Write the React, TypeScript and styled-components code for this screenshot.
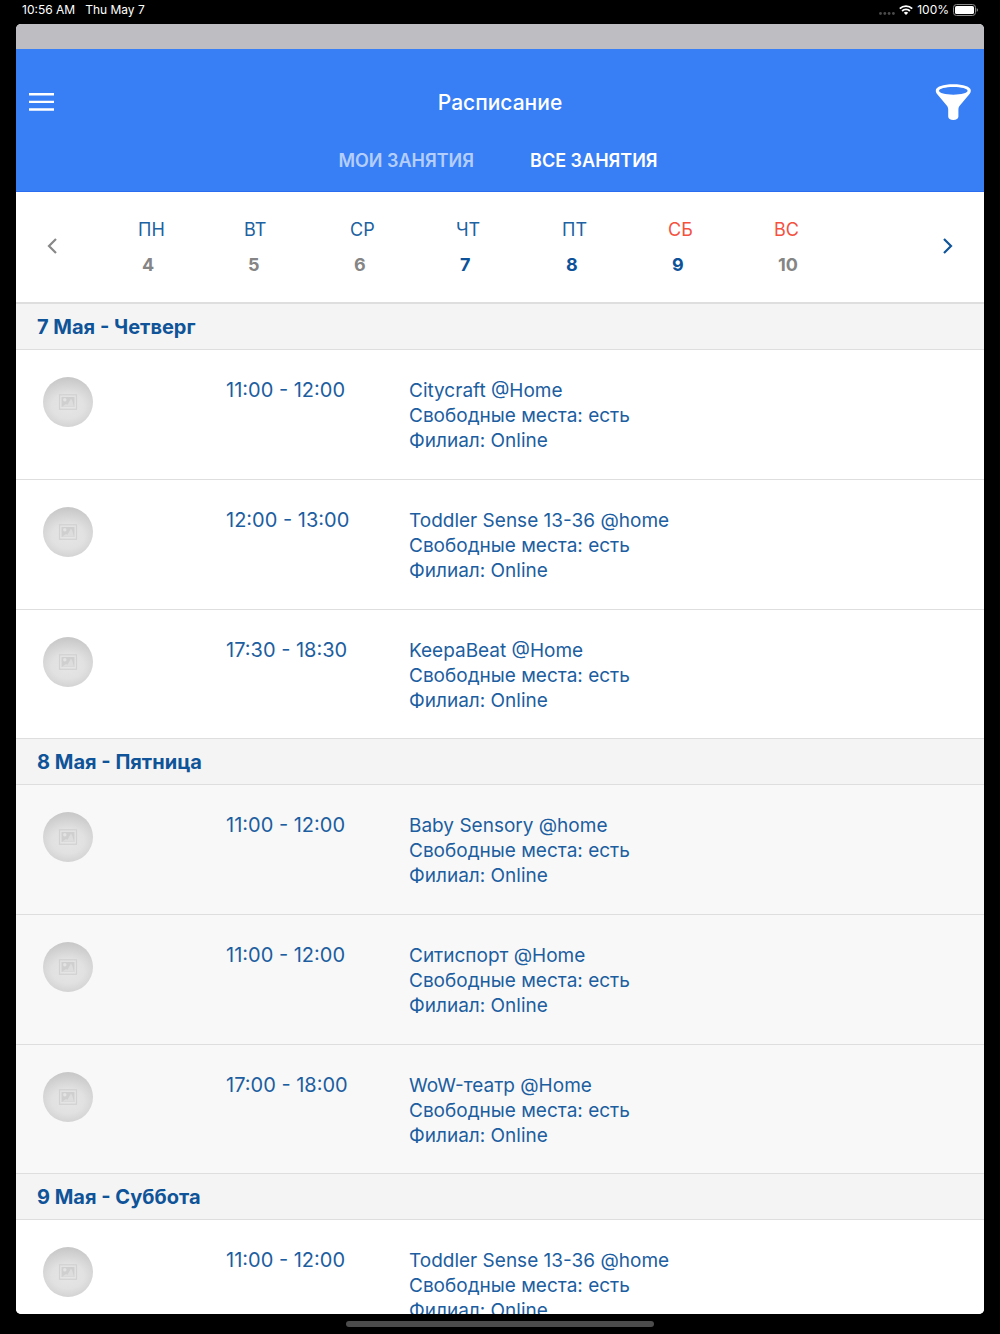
import React, { useState } from "react";
import styled, { createGlobalStyle } from "styled-components";

const GlobalStyle = createGlobalStyle`
  * { box-sizing: border-box; }
  body {
    margin: 0;
    background: #000;
    font-family: Inter, "Liberation Sans", sans-serif;
    -webkit-font-smoothing: antialiased;
  }
  button { font: inherit; border: 0; padding: 0; background: none; cursor: pointer; }
  h1, h2, p, ul { margin: 0; padding: 0; }
  ul { list-style: none; }
`;

const Device = styled.div`
  height: 100vh;
  display: flex;
  flex-direction: column;
  padding: 0 16px;
`;

const StatusBar = styled.div`
  flex: none;
  height: 24px;
  padding: 0 6px 4px;
  display: flex;
  align-items: center;
  justify-content: space-between;
  color: #fff;
  font-size: 12px;
  line-height: 20px;
`;

const StatusGroup = styled.div<{ $gap: number }>`
  display: flex;
  align-items: center;
  gap: ${(p) => p.$gap}px;
`;

const Screen = styled.div`
  flex: 1;
  min-height: 0;
  display: flex;
  flex-direction: column;
  overflow: hidden;
  border-radius: 5px;
  background: #fff;
`;

const TopStrip = styled.div`
  flex: none;
  height: 25px;
  background: #bebdc2;
`;

const Header = styled.header`
  flex: none;
  padding: 24px 12px 14px;
  background: #387ef5;
  border-bottom: 1px solid #2a6df0;
  color: #fff;
`;

const TitleRow = styled.div`
  display: grid;
  grid-template-columns: 60px 1fr 60px;
  align-items: center;
  height: 58px;
`;

const Title = styled.h1`
  padding-top: 2px;
  text-align: center;
  font-size: 21px;
  line-height: 28px;
  font-weight: 500;
`;

const IconButton = styled.button<{ $end?: boolean }>`
  display: flex;
  justify-content: ${(p) => (p.$end ? "flex-end" : "flex-start")};
  align-items: center;
  color: inherit;
`;

const Tabs = styled.div`
  display: flex;
  justify-content: center;
  gap: 56px;
  padding: 18px 4px 4px 0;
`;

const Tab = styled.button<{ $active: boolean }>`
  && {
    font-size: 18px;
    font-weight: 600;
    line-height: 24px;
    color: ${(p) => (p.$active ? "#fff" : "rgba(255, 255, 255, 0.65)")};
  }
`;

const Week = styled.nav`
  flex: none;
  display: grid;
  grid-template-columns: 122px repeat(7, 1fr) 104px;
  padding: 25px 0 24px;
  border-bottom: 1px solid #dedede;
`;

const Arrow = styled.button<{ $end?: boolean }>`
  && {
    display: flex;
    align-items: center;
    justify-content: ${(p) => (p.$end ? "flex-end" : "flex-start")};
    padding: ${(p) => (p.$end ? "0 31px 4px 0" : "0 0 4px 31px")};
    color: ${(p) => (p.$end ? "#10559a" : "#888")};
  }
`;

const Day = styled.button`
  display: flex;
  flex-direction: column;
  align-items: flex-start;
  gap: 9px;
`;

const DayName = styled.span<{ $weekend: boolean }>`
  font-size: 18px;
  line-height: 26px;
  color: ${(p) => (p.$weekend ? "#f4513f" : "#2061a2")};
`;

const DayNumber = styled.span<{ $open: boolean }>`
  padding-left: 4px;
  font-size: 18px;
  font-weight: 700;
  line-height: 26px;
  color: ${(p) => (p.$open ? "#0d5299" : "#858585")};
`;

const Schedule = styled.main`
  flex: 1;
  min-height: 0;
  overflow: hidden;
`;

const DayHeading = styled.h2`
  padding: 9px 21px 8px;
  border-top: 1px solid #dedede;
  border-bottom: 1px solid #dedede;
  background: #f4f4f4;
  color: #0f5398;
  font-size: 20px;
  font-weight: 700;
  line-height: 28px;
`;

const Section = styled.section<{ $shaded: boolean }>`
  background: ${(p) => (p.$shaded ? "#f8f8f8" : "#fff")};
  & + & { margin-top: -1px; }
`;

const Lesson = styled.li`
  display: grid;
  grid-template-columns: 1fr 1fr 3fr;
  padding: 27px 26px 26px 27px;
  color: #1c5e9f;
  line-height: 25px;
  border-bottom: 1px solid #dedede;
  &:last-child { border-bottom: 0; }
`;

const LessonTime = styled.time`
  padding-top: 1px;
  font-size: 20px;
`;

const LessonInfo = styled.div`
  padding-top: 1px;
  font-size: 19px;
`;

const Avatar = styled.div`
  width: 50px;
  height: 50px;
  display: flex;
  align-items: center;
  justify-content: center;
  border-radius: 50%;
  background: radial-gradient(ellipse 36px 28px at 50% 58%, #e6e6e6 0%, #e1e1e1 45%, #c8c8c8 100%);
`;

const MenuIcon = () => (
  <svg width="36" height="22" viewBox="0 0 36 22" fill="currentColor" aria-hidden="true">
    <path d="M1 2h25v2.4H1zM1 9.7h25v2.4H1zM1 17.3h25v2.4H1z" />
  </svg>
);

const FunnelIcon = () => (
  <svg width="37" height="36" viewBox="0 0 37 36" fill="currentColor" aria-hidden="true">
    <path
      fillRule="evenodd"
      d="M18.300 0.300C8.300.300.800 2.700.800 6.500c0 1.600.6 2.800 1.900 4.300l8.800 10.400c1.200 1.500 1.700 2.700 1.700 4.300v7c0 2.300 2 3.500 5.100 3.500s5.100-1.200 5.100-3.500v-7c0-1.600.5-2.800 1.700-4.300l8.800-10.400c1.300-1.500 1.900-2.700 1.900-4.300C35.800 2.700 28.300.300 18.300.300ZM18.300 2.900c8 0 14.300 1.600 14.300 3.900s-6.300 3.900-14.300 3.900S4 9.100 4 6.800s6.300-3.900 14.300-3.900Z"
    />
  </svg>
);

const WifiIcon = () => (
  <svg width="14" height="10" viewBox="0 0 14 10" fill="none" stroke="#fff" strokeWidth="1.8" aria-hidden="true">
    <path d="M.8 3.700a8.800 8.800 0 0 1 12.400 0M3.100 6a5.500 5.500 0 0 1 7.800 0" />
    <path d="M7 10 4.800 7.800a3.100 3.100 0 0 1 4.400 0Z" fill="#fff" stroke="none" />
  </svg>
);

const SignalDots = () => (
  <svg width="16" height="12" viewBox="0 0 16 12" fill="#4b4b4b" aria-hidden="true">
    {[1.5, 5.8, 10.1, 14.4].map((x) => (
      <circle key={x} cx={x} cy="9.5" r="1.4" />
    ))}
  </svg>
);

const BatteryIcon = () => (
  <svg width="25" height="12" viewBox="0 0 25 12" aria-hidden="true">
    <rect x=".5" y=".5" width="22" height="11" rx="3" fill="none" stroke="#8a8a8a" />
    <rect x="2" y="2" width="19" height="8" rx="1.6" fill="#fff" />
    <path d="M23.700 4.200c.9.300 1.300 1 1.300 1.800s-.4 1.500-1.300 1.800Z" fill="#8a8a8a" />
  </svg>
);

const Chevron = ({ right = false }: { right?: boolean }) => (
  <svg width="11" height="16" viewBox="0 0 11 16" fill="none" stroke="currentColor" strokeWidth="2.2" aria-hidden="true">
    <path d={right ? "M2 1l7 7-7 7" : "M9 1 2 8l7 7"} />
  </svg>
);

const PictureIcon = () => (
  <svg width="20" height="16" viewBox="0 0 20 16" aria-hidden="true">
    <rect x="1.5" y=".75" width="17" height="14.5" fill="none" stroke="#d2d2d2" strokeWidth="1.2" />
    <rect x="3.500" y="3" width="13" height="10" fill="#cfcfcf" />
    <circle cx="6.800" cy="5.800" r="1.700" fill="#e3e3e3" />
    <path d="M4 12.800 8 10l1.500.8 3.500-6.300 1.300 2.200L16 12.800Z" fill="#dddddd" />
  </svg>
);

const days = [
  { name: "ПН", number: 4 },
  { name: "ВТ", number: 5 },
  { name: "СР", number: 6 },
  { name: "ЧТ", number: 7, open: true },
  { name: "ПТ", number: 8, open: true },
  { name: "СБ", number: 9, open: true, weekend: true },
  { name: "ВС", number: 10, weekend: true },
];

const schedule = [
  {
    title: "7 Мая - Четверг",
    lessons: [
      ["11:00 - 12:00", "Citycraft @Home"],
      ["12:00 - 13:00", "Toddler Sense 13-36 @home"],
      ["17:30 - 18:30", "KeepaBeat @Home"],
    ],
  },
  {
    title: "8 Мая - Пятница",
    shaded: true,
    lessons: [
      ["11:00 - 12:00", "Baby Sensory @home"],
      ["11:00 - 12:00", "Ситиспорт @Home"],
      ["17:00 - 18:00", "WoW-театр @Home"],
    ],
  },
  {
    title: "9 Мая - Суббота",
    lessons: [["11:00 - 12:00", "Toddler Sense 13-36 @home"]],
  },
];

const HomeArea = styled.div`
  flex: none;
  height: 20px;
  display: flex;
  align-items: center;
  justify-content: center;
`;

const HomeIndicator = styled.div`
  width: 308px;
  height: 6px;
  border-radius: 3px;
  background: #4c4c4c;
`;

const tabs = ["МОИ ЗАНЯТИЯ", "ВСЕ ЗАНЯТИЯ"];

export default function App() {
  const [active, setActive] = useState(1);
  return (
    <>
      <GlobalStyle />
      <Device>
        <StatusBar>
          <StatusGroup $gap={10}>
            <span>10:56 AM</span>
            <span>Thu May 7</span>
          </StatusGroup>
          <StatusGroup $gap={4}>
            <SignalDots />
            <WifiIcon />
            <span>100%</span>
            <BatteryIcon />
          </StatusGroup>
        </StatusBar>
        <Screen>
          <TopStrip />
          <Header>
            <TitleRow>
              <IconButton aria-label="Меню"><MenuIcon /></IconButton>
              <Title>Расписание</Title>
              <IconButton $end aria-label="Фильтр"><FunnelIcon /></IconButton>
            </TitleRow>
            <Tabs>
              {tabs.map((label, i) => (
                <Tab key={label} $active={i === active} onClick={() => setActive(i)}>
                  {label}
                </Tab>
              ))}
            </Tabs>
          </Header>
          <Week>
            <Arrow aria-label="Назад"><Chevron /></Arrow>
            {days.map((d) => (
              <Day key={d.number}>
                <DayName $weekend={!!d.weekend}>{d.name}</DayName>
                <DayNumber $open={!!d.open}>{d.number}</DayNumber>
              </Day>
            ))}
            <Arrow $end aria-label="Вперёд"><Chevron right /></Arrow>
          </Week>
          <Schedule>
            {schedule.map((section) => (
              <Section key={section.title} $shaded={!!section.shaded}>
                <DayHeading>{section.title}</DayHeading>
                <ul>
                  {section.lessons.map(([time, name], i) => (
                    <Lesson key={i}>
                      <Avatar><PictureIcon /></Avatar>
                      <LessonTime>{time}</LessonTime>
                      <LessonInfo>
                        <p>{name}</p>
                        <p>Свободные места: есть</p>
                        <p>Филиал: Online</p>
                      </LessonInfo>
                    </Lesson>
                  ))}
                </ul>
              </Section>
            ))}
          </Schedule>
        </Screen>
        <HomeArea><HomeIndicator /></HomeArea>
      </Device>
    </>
  );
}
